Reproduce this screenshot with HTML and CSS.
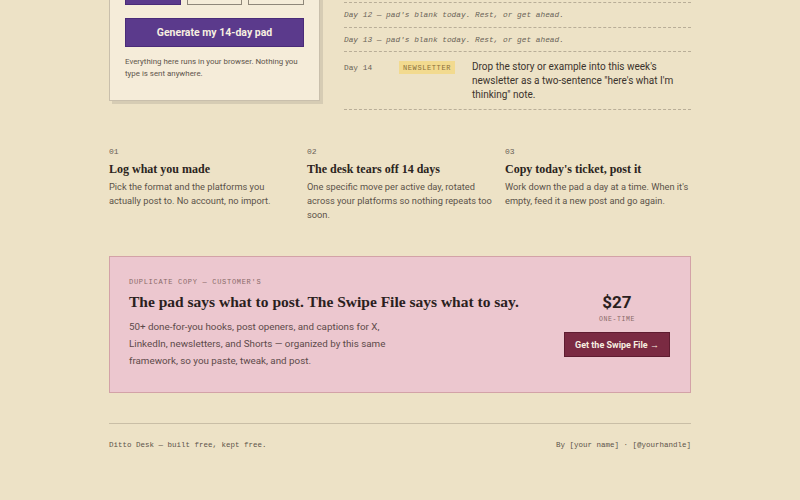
FILE: index.html
```html
<!DOCTYPE html>
<html>
<head>
<meta charset="utf-8">
<link rel="stylesheet" href="styles.css">
</head>
<body>
<main class="page">
  <section class="top">
    <div class="card">
      <div class="seg">
        <button class="seg-btn on"></button>
        <button class="seg-btn"></button>
        <button class="seg-btn"></button>
      </div>
      <button class="gen">Generate my 14-day pad</button>
      <p class="note">Everything here runs in your browser. Nothing you type is sent anywhere.</p>
    </div>
    <div class="pad">
      <div class="row blank">Day 12 — pad's blank today. Rest, or get ahead.</div>
      <div class="row blank">Day 13 — pad's blank today. Rest, or get ahead.</div>
      <div class="row full">
        <span class="day">Day 14</span>
        <span class="tag">NEWSLETTER</span>
        <span class="desc">Drop the story or example into this week's newsletter as a two-sentence "here's what I'm thinking" note.</span>
      </div>
    </div>
  </section>

  <section class="steps">
    <div class="step">
      <div class="num">01</div>
      <h3>Log what you made</h3>
      <p>Pick the format and the platforms you actually post to. No account, no import.</p>
    </div>
    <div class="step">
      <div class="num">02</div>
      <h3>The desk tears off 14 days</h3>
      <p>One specific move per active day, rotated across your platforms so nothing repeats too soon.</p>
    </div>
    <div class="step">
      <div class="num">03</div>
      <h3>Copy today's ticket, post it</h3>
      <p>Work down the pad a day at a time. When it's empty, feed it a new post and go again.</p>
    </div>
  </section>

  <section class="promo">
    <div class="promo-main">
      <div class="eyebrow">DUPLICATE COPY — CUSTOMER'S</div>
      <h2>The pad says what to post. The Swipe File says what to say.</h2>
      <p>50+ done-for-you hooks, post openers, and captions for X, LinkedIn, newsletters, and Shorts — organized by this same framework, so you paste, tweak, and post.</p>
    </div>
    <div class="promo-buy">
      <div class="price">$27</div>
      <div class="once">ONE-TIME</div>
      <button class="buy">Get the Swipe File →</button>
    </div>
  </section>

  <footer class="foot">
    <span>Ditto Desk — built free, kept free.</span>
    <span>By [your name] · [@yourhandle]</span>
  </footer>
</main>
</body>
</html>
```

FILE: styles.css
```css
* { box-sizing: border-box; }
html, body { margin: 0; padding: 0; }
body {
  background: #ede2c6;
  color: #2b2420;
  font-family: Roboto, "Noto Sans", sans-serif;
  overflow: hidden;
}
.page {
  width: 582px;
  margin: -22px auto 0 109px;
}
.top {
  display: grid;
  grid-template-columns: 211px 1fr;
  column-gap: 24px;
  align-items: start;
}
.card {
  background: #f5ecd9;
  border: 1px solid #c9bfac;
  box-shadow: 3px 3px 0 #d6ccb4;
  padding: 0 15px 20px;
}
.seg {
  display: grid;
  grid-template-columns: 1fr 1fr 1fr;
  gap: 6px;
}
.seg-btn {
  height: 26px;
  background: #f5ecd9;
  border: 1px solid #8f877a;
  padding: 0;
}
.seg-btn.on {
  background: #5b3a8c;
  border-color: #4a2b78;
}
.gen {
  display: block;
  width: 100%;
  margin-top: 13px;
  height: 29px;
  background: #5b3a8c;
  border: 1px solid #4a2b78;
  color: #f7efe0;
  font-family: Roboto, sans-serif;
  font-weight: 700;
  font-size: 10.5px;
  padding: 0;
}
.note {
  margin: 9px 0 0;
  font-size: 7.9px;
  line-height: 12px;
  color: #5d544b;
}
.pad {
  margin-top: 24px;
  border-top: 1px dashed #b9ae98;
}
.row {
  border-bottom: 1px dashed #b9ae98;
}
.row.blank {
  font-family: "Liberation Mono", "DejaVu Sans Mono", monospace;
  font-style: italic;
  font-size: 7.8px;
  color: #6b6258;
  height: 24.5px;
  line-height: 24px;
}
.row.full {
  display: grid;
  grid-template-columns: 55px 73px 1fr;
  padding: 8px 0 7px;
  align-items: start;
}
.day {
  font-family: "Liberation Mono", "DejaVu Sans Mono", monospace;
  font-size: 7.8px;
  color: #6b6258;
  line-height: 14px;
  padding-top: 1px;
}
.tag {
  justify-self: start;
  background: #f2da8f;
  color: #8a6f3c;
  font-family: "Liberation Mono", "DejaVu Sans Mono", monospace;
  font-size: 7px;
  letter-spacing: 0.6px;
  padding: 2px 4px 1px;
  line-height: 10px;
  margin-top: 1px;
}
.desc {
  font-size: 10px;
  line-height: 14px;
  color: #3b332d;
}
.steps {
  display: grid;
  grid-template-columns: repeat(3, 1fr);
  column-gap: 12px;
  margin-top: 36px;
}
.num {
  font-family: "Liberation Mono", "DejaVu Sans Mono", monospace;
  font-size: 8px;
  color: #6b6258;
  line-height: 12px;
}
.step h3 {
  margin: 2px 0 0;
  font-family: "Liberation Serif", serif;
  font-weight: 700;
  font-size: 12px;
  line-height: 18px;
  color: #2b2420;
}
.step p {
  margin: 2px 0 0;
  font-size: 9.25px;
  line-height: 14px;
  color: #5b5249;
}
.promo {
  margin-top: 34px;
  background: #ecc7cf;
  border: 1px solid #d3a2a7;
  display: flex;
  justify-content: space-between;
  align-items: flex-start;
  padding: 19px 20px 23px 19px;
}
.eyebrow {
  font-family: "Liberation Mono", "DejaVu Sans Mono", monospace;
  font-size: 7px;
  letter-spacing: 0.7px;
  color: #8a6a68;
  line-height: 12px;
}
.promo h2 {
  margin: 4px 0 0;
  font-family: "Liberation Serif", serif;
  font-weight: 700;
  font-size: 15.5px;
  line-height: 20px;
  color: #2b1f1e;
}
.promo p {
  margin: 6px 0 0;
  width: 280px;
  font-size: 9.8px;
  line-height: 17px;
  color: #5d4a4a;
}
.promo-buy {
  display: flex;
  flex-direction: column;
  align-items: center;
  padding-top: 15px;
}
.price {
  font-family: Roboto, sans-serif;
  font-weight: 700;
  font-size: 17px;
  line-height: 22px;
  color: #2b1f1e;
}
.once {
  font-family: "Liberation Mono", "DejaVu Sans Mono", monospace;
  font-size: 6.5px;
  letter-spacing: 0.6px;
  color: #8a6a68;
  line-height: 9px;
  margin-top: 2px;
}
.buy {
  margin-top: 8px;
  width: 106px;
  height: 25px;
  background: #7a2a42;
  border: 1px solid #5e1c30;
  color: #f7efe0;
  font-family: Roboto, sans-serif;
  font-weight: 700;
  font-size: 9px;
  padding: 0;
}
.foot {
  margin-top: 30px;
  border-top: 1px solid #c9bea6;
  padding-top: 17px;
  display: flex;
  justify-content: space-between;
  font-family: "Liberation Mono", "DejaVu Sans Mono", monospace;
  font-size: 7.5px;
  color: #5d544b;
}
```
